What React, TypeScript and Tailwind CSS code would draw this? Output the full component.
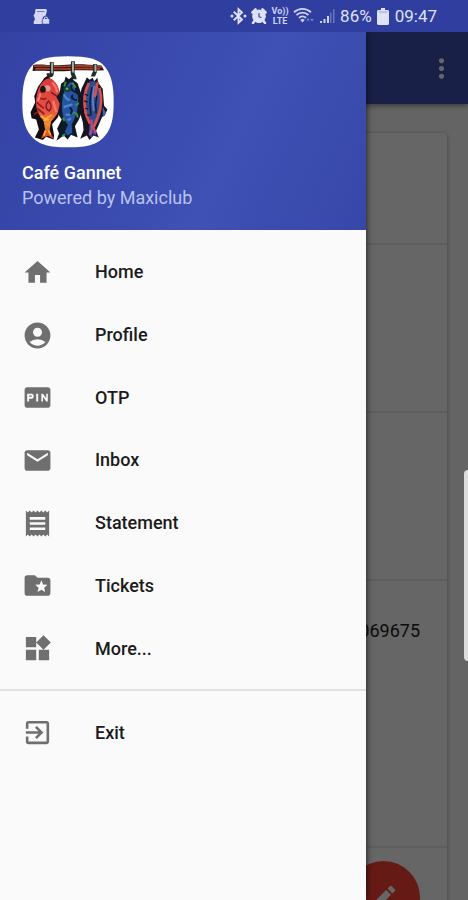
import React from "react";
import {
  MdAccountCircle,
  MdEdit,
  MdEmail,
  MdExitToApp,
  MdFiberPin,
  MdFolderSpecial,
  MdHome,
  MdMoreVert,
  MdReceipt,
  MdWidgets,
} from "react-icons/md";

const navItems = [
  { name: "Home", href: "#home", icon: MdHome },
  { name: "Profile", href: "#profile", icon: MdAccountCircle },
  { name: "OTP", href: "#otp", icon: MdFiberPin },
  { name: "Inbox", href: "#inbox", icon: MdEmail },
  { name: "Statement", href: "#statement", icon: MdReceipt },
  { name: "Tickets", href: "#tickets", icon: MdFolderSpecial },
  { name: "More...", href: "#more", icon: MdWidgets },
];

function NotificationIcon() {
  return (
    <svg viewBox="0 0 17 17" className="h-[17px] w-[17px]" fill="#d3d7f2">
      <path d="M2.5 1h10.5l1 1.200-1.200 5.300c-2 .3-3.300 1.600-3.400 3.500l-.6.800V16H1l-.5-1.500L2 11 .5 7.500 2 5z" />
      <path d="M11 11v-.7a1.900 1.900 0 0 1 3.800 0v.7h1.400v4.800H9.600V11zm1 0h1.800v-.6a.9.9 0 0 0-1.800 0z" />
      <path d="M4 3.500h7.500" stroke="#303f9f" strokeWidth=".6" />
    </svg>
  );
}

function BluetoothIcon() {
  return (
    <svg viewBox="0 0 17 18" className="h-[18px] w-[17px]" fill="none" stroke="#dfe2f6" strokeWidth="1.900">
      <path d="m3.800 4.800 8.200 7.700-3.500 3.300V2.200L12 5.500l-8.200 7.700" />
      <circle cx="2" cy="9" r="1.500" fill="#dfe2f6" stroke="none" />
      <circle cx="15" cy="9" r="1.500" fill="#dfe2f6" stroke="none" />
    </svg>
  );
}

function AlarmIcon() {
  return (
    <svg viewBox="0 0 16 16" className="h-4 w-4" fill="none" stroke="#dfe2f6" strokeLinecap="round">
      <path d="M1.500 4.500 4.500 1.500M14.500 4.500l-3-3M3.500 13 2 15M12.500 13 14 15" strokeWidth="2.600" />
      <circle cx="8" cy="8.300" r="6.300" fill="#dfe2f6" />
      <path d="M8 5.500v3.200l2 .8" stroke="#303f9f" strokeWidth="1.200" />
    </svg>
  );
}

function WifiIcon() {
  return (
    <svg viewBox="0 0 22 18" className="h-[18px] w-[22px]" fill="none" stroke="#cfd3ef" strokeWidth="1.800">
      <path d="M1 5.200C6 .8 13 .8 18 5.200M3.500 8C7 4.800 12 4.800 15.500 8M6 10.800c2-2 5-2 7 0" />
      <path d="m9.500 15.500-2.300-2.700c1.300-1.200 3.300-1.200 4.600 0z" fill="#cfd3ef" stroke="none" />
      <path d="M13.300 13.500 15 11l1.700 2.500zM17.300 12l1.700 2.500 1.700-2.500z" fill="#8089c8" stroke="none" />
    </svg>
  );
}

function SignalIcon() {
  return (
    <svg viewBox="0 0 16 16" className="h-4 w-4">
      <path d="M1 13h2v2H1zM4.500 11h2v4h-2zM8 8h2v7H8z" fill="#cfd3ef" />
      <path d="M11 4.500h1.500V15H11zM14 1h1.500v14H14z" fill="#6a75bd" />
    </svg>
  );
}

function BatteryIcon() {
  return (
    <svg viewBox="0 0 12 17" className="h-[17px] w-3">
      <path d="M4 0h4v2h3l1 1v13l-1 1H1l-1-1V3l1-1h3z" fill="#dfe2f6" />
      <path d="M1.500 3.500h9v1h-9z" fill="#9ba2d6" />
    </svg>
  );
}

function StatusBar() {
  return (
    <header className="relative z-30 flex h-8 shrink-0 items-center justify-between bg-[#303f9f] pl-[33px] pr-[31px] text-[17px] leading-5 text-[#dfe2f6]">
      <NotificationIcon />
      <div className="flex items-center gap-1">
        <BluetoothIcon />
        <AlarmIcon />
        <span className="flex w-[18px] flex-col items-center text-[9px] font-bold leading-[10px] text-[#cfd3ef]">
          <span>Vo))</span>
          <span>LTE</span>
        </span>
        <WifiIcon />
        <SignalIcon />
        <span className="px-px">86%</span>
        <BatteryIcon />
        <span className="pl-0.5">09:47</span>
      </div>
    </header>
  );
}

// Restaurant logo: three fish hanging from a rail
function Logo() {
  return (
    <svg viewBox="36 30 278 278" className="h-[92px] w-[92px]" role="img" aria-label="Café Gannet logo">
      <defs>
        <linearGradient id="redFish" x1="0" y1="0" x2="0" y2="1">
          <stop offset="0" stopColor="#d8383c" />
          <stop offset=".55" stopColor="#ea5340" />
          <stop offset=".75" stopColor="#f0902c" />
          <stop offset="1" stopColor="#d93a20" />
        </linearGradient>
      </defs>
      <path
        d="M175 31c60 0 92 8 112 32 20 25 26 58 26 106s-6 78-26 102c-22 26-52 35-112 35s-90-9-112-35c-20-24-26-54-26-102s6-81 26-106c20-24 52-32 112-32z"
        fill="#fff"
      />
      <path d="M70 57c30-4 50 4 90 0s70-2 116 2l8 14c-40 3-68-2-108 2s-70-3-108 0z" fill="#2c1510" />
      <path d="M72 61c40-3 60 3 100 0s70-1 106 2M76 69c30-3 60 2 98 0s66-2 98 0" stroke="#a8402a" strokeWidth="5" fill="none" />

      {/* red fish */}
      <path d="M116 88 104 96 84 124 73 152l3 18-14 30 3 18 14 4 8 30-12 24 24 8 10-10 22 8 2-12-6-34 18-22 8-34-4-42-10-24-18-16-4-10z" fill="#160d12" />
      <path d="M118 97c20 4 34 32 35 62 0 34-12 52-29 68l-5 28 13 26-17-10-22 8 13-26-5-28c-18-18-25-42-22-66 4-30 15-58 39-62z" fill="url(#redFish)" />
      <path d="M104 122c4-5 12-5 17 0 4 7 0 15-7 15s-10-8-10-15z" fill="#d99c8c" />
      <path d="M98 120c-8 4-10 14-4 20 8 4 14-2 14-8s-4-12-10-12z" fill="#1d1418" />
      <path d="M124 140l18 12 8 0M116 166c-10 10-10 24 2 30 8-8 8-20-2-30z" fill="none" stroke="#6d1822" strokeWidth="4" />
      <path d="M84 152c10 12 18 10 26 6M80 170l22 18M82 188l22 18M72 206l14-8" stroke="#8e1c24" strokeWidth="5" fill="none" />
      <path d="M127 110c10 10 14 20 15 30M92 144l-8 22M130 166l10 34" stroke="#f7796c" strokeWidth="7" fill="none" />
      <path d="M92 212l16 8 18-12M100 224l18-2M107 255l-5 16M116 254l6 14" stroke="#f2b13a" strokeWidth="5" fill="none" />

      {/* blue fish */}
      <path d="m168 92 10 8 14-12-2 14 14 10 10 30 2 34 8 22-10 8-6 16-12 20 8 34-20-8-10 14-12-12-22 16 8-22-6-14 14-28-12-18 6-30-10-20 10-14 4-26 10-8z" fill="#101a25" />
      <path d="M183 108c20 14 25 42 22 68-2 30-10 44-19 60l2 26-14 8-9-10 10-22c-16-18-20-40-18-66 2-24 8-50 26-64z" fill="#2754a0" />
      <path d="M162 146c4 10 8 14 18 18M162 186c8-8 16-4 26-10M168 206c8 4 18 0 24-8M174 224l10-6" stroke="#4c86c6" strokeWidth="7" fill="none" />
      <path d="M188 110l10 16M168 108l-4 14M192 202c8-2 12 4 12 14M164 226l-4-10M198 180l10-8M166 266l-8 6" stroke="#38914a" strokeWidth="6" fill="none" />
      <path d="M186 118c-6 12 4 18 14 22M190 148c-8 8 0 14 12 16M180 186c10 6 8 14 2 20M198 126l6 20" stroke="#0e172b" strokeWidth="6" fill="none" />
      <path d="M160 130c4-10 18-12 24-4 2 10-8 16-16 12z" fill="#15402f" />
      <circle cx="172" cy="129" r="4" fill="#6db07a" />

      {/* striped fish */}
      <path d="m232 94 8 8 10-6 4 10 10-10 2 14 14 20 4 50 10 12-8 18-8 4-10 24-8 18 8 20-16-6-12 14-8-14-20 10 10-26-2-22-8-30-4-38 8-36 10-20z" fill="#171321" />
      <path d="M242 106c-20 18-24 48-20 78 2 22 10 38 18 52l-3 32 10 10 2-14 12 8-6-26c14-16 22-44 22-68 0-28-6-58-21-72z" fill="#314b92" />
      <path d="M238 112c-13 24-16 54-10 88 2 12 8 22 13 34M266 108c-6 14-8 30-9 46M270 126c8 28 5 62-5 88l-12 30" stroke="#db5143" strokeWidth="8" fill="none" />
      <path d="M248 124c-8 28-8 58-3 86M262 150c-4 18-4 38-2 54" stroke="#111526" strokeWidth="4" fill="none" />
      <path d="M254 120c-5 26-5 50-1 76" stroke="#5f86cc" strokeWidth="5" fill="none" />
      <path d="m246 222 1 30-6 16M251 242l8 22" stroke="#c34972" strokeWidth="6" fill="none" />
      <path d="M226 146l10 3M224 166l10 3M227 188l9 2M232 208l9 2" stroke="#15182a" strokeWidth="4" />
      <path d="M280 184l10 18-10 12" fill="#3e68b5" />

      {/* hooks */}
      <path d="M126 48v34c0 8-10 8-10 0M190 46l-1 30c-2 14 6 14 6 24M257 54v20c0 8-6 10-6 18" stroke="#202a26" strokeWidth="12" fill="none" />
      <path d="M127 50v32M190 48v32M258 56v22" stroke="#a2ada3" strokeWidth="6" fill="none" />
    </svg>
  );
}

function Drawer() {
  return (
    <aside className="absolute inset-y-0 left-0 z-20 w-[79%] max-w-[366px] bg-[#fafafa] shadow-[1px_0_6px_rgba(0,0,0,0.6)]">
      <div className="flex h-[198px] flex-col justify-between bg-[linear-gradient(115deg,#3342a3_0%,#3949ad_35%,#3f51b5_62%,#3747a9_100%)] px-[22px] pb-5 pt-6">
        <Logo />
        <div className="text-lg leading-[25px]">
          <h1 className="font-medium text-white">Café Gannet</h1>
          <p className="text-[#b9c2f0]">Powered by Maxiclub</p>
        </div>
      </div>

      <nav className="text-lg font-medium text-[#1b1b1b]">
        <div className="grid h-[461px] auto-rows-fr border-b-2 border-[#e2e2e2] pb-[9px] pt-[11px]">
          {navItems.map((item) => (
            <a key={item.name} href={item.href} className="flex items-center gap-[42px] px-[22px]">
              <item.icon className="h-[31px] w-[31px] text-[#6f6f6f]" />
              <span>{item.name}</span>
            </a>
          ))}
        </div>
        <div className="py-[10px]">
          <a href="#exit" className="flex h-[63px] items-center gap-[42px] px-[22px]">
            <MdExitToApp className="h-[31px] w-[31px] text-[#6f6f6f]" />
            <span>Exit</span>
          </a>
        </div>
      </nav>
    </aside>
  );
}

export default function App() {
  return (
    <div className="flex h-screen flex-col overflow-hidden bg-[#fafafa] font-['Roboto',sans-serif]">
      <StatusBar />
      <div className="relative min-h-0 flex-1">
        <div className="flex h-[72px] items-center justify-end bg-[#3f51b5] pr-[11px] shadow-[0_2px_5px_rgba(0,0,0,0.4)]">
          <button type="button" aria-label="More options" className="text-white">
            <MdMoreVert className="h-[31px] w-[31px]" />
          </button>
        </div>

        <main className="px-[21px] pt-[29px]">
          <div className="divide-y-2 divide-[#eeeeee] rounded bg-white shadow-[0_1px_4px_rgba(0,0,0,0.35)]">
            <div className="h-[112px]" />
            <div className="h-[168px]" />
            <div className="h-[168px]" />
            <div className="h-[267px] pr-[27px] pt-[38px] text-right text-lg leading-6 text-[#212121]">069675</div>
            <div className="h-[90px]" />
          </div>
        </main>

        <button
          type="button"
          aria-label="Edit"
          className="absolute -bottom-[34px] right-12 flex h-[73px] w-[73px] items-center justify-center rounded-full bg-[#ff4336] text-white shadow-lg"
        >
          <MdEdit className="h-[31px] w-[31px]" />
        </button>

        {/* Scrim */}
        <div className="absolute inset-0 z-10 bg-black/60" />

        <Drawer />

        {/* Edge panel handle */}
        <div className="absolute right-0 top-[438px] z-20 h-[191px] w-1 rounded-l bg-[#dcdcdc]" />
      </div>
    </div>
  );
}
